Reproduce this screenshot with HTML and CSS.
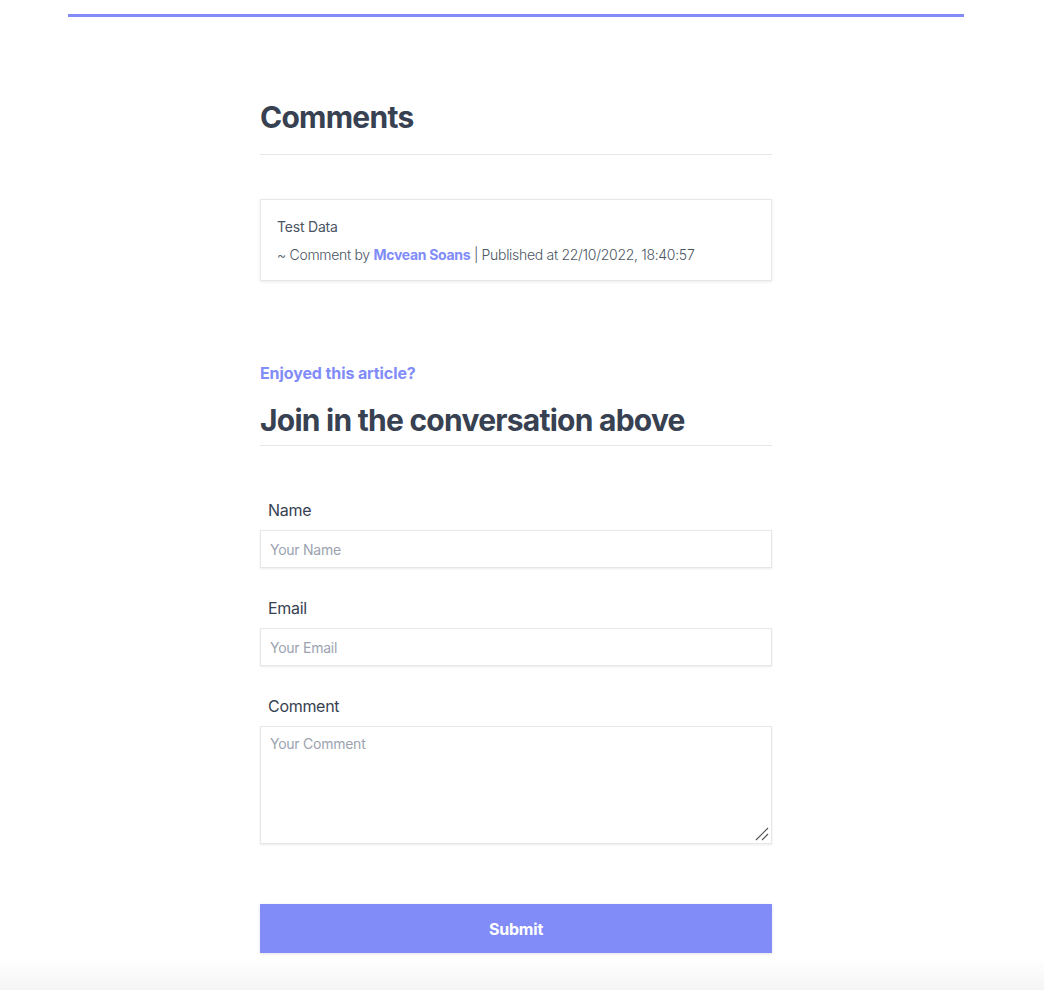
FILE: index.html
```html
<!DOCTYPE html>
<html lang="en">
<head>
<meta charset="utf-8">
<title>Comments</title>
<link rel="stylesheet" href="styles.css">
</head>
<body>
<div class="page">
  <div class="topbar"></div>
  <main class="main">
    <h2 class="title">Comments</h2>
    <hr class="rule">
    <div class="card">
      <p class="card-text">Test Data</p>
      <p class="card-meta">~ Comment by <span class="author">Mcvean Soans</span> <span class="sep">|</span> Published at 22/10/2022, 18:40:57</p>
    </div>
    <p class="eyebrow">Enjoyed this article?</p>
    <h2 class="title title-join">Join in the conversation above</h2>
    <hr class="rule rule-join">
    <form class="form">
      <label class="field">
        <span class="label">Name</span>
        <input class="input" type="text" placeholder="Your Name">
      </label>
      <label class="field">
        <span class="label">Email</span>
        <input class="input" type="email" placeholder="Your Email">
      </label>
      <label class="field">
        <span class="label">Comment</span>
        <span class="textarea-wrap">
          <textarea class="input textarea" placeholder="Your Comment"></textarea>
          <svg class="grip" width="14" height="14" viewBox="0 0 14 14" aria-hidden="true">
            <path d="M1 13 L13 1 M7 13 L13 7" stroke="#555" stroke-width="1.2" fill="none"/>
          </svg>
        </span>
      </label>
      <button class="submit" type="button">Submit</button>
    </form>
  </main>
</div>
</body>
</html>
```

FILE: styles.css
```css
html {
  background: linear-gradient(to bottom, #ffffff 0, #ffffff 957px, #f5f5f5 990px);
  min-height: 100%;
}
body {
  margin: 0;
  font-family: Inter, "Noto Sans", sans-serif;
  color: #374151;
}
.page {
  width: 1032px;
  height: 990px;
  overflow: hidden;
}
.topbar {
  margin: 14px 68px 0;
  height: 3px;
  background: #818cf8;
}
.main {
  width: 512px;
  margin: 0 auto;
}
.title {
  margin: 82px 0 0;
  font-size: 30px;
  line-height: 36px;
  font-weight: 700;
  letter-spacing: -0.75px;
  color: #374151;
}
.rule {
  margin: 19px 0 0;
  border: 0;
  border-top: 1px solid #e5e7eb;
}
.card {
  margin-top: 44px;
  border: 1px solid #e5e7eb;
  box-shadow: 0 1px 3px rgba(0, 0, 0, 0.08);
  padding: 17px 16px 15px;
}
.card-text {
  margin: 0 0 8px;
  font-size: 14px;
  line-height: 20px;
  letter-spacing: -0.2px;
  color: #4b5563;
}
.card-meta {
  margin: 0;
  font-size: 14px;
  line-height: 20px;
  font-weight: 300;
  letter-spacing: -0.3px;
  color: #4b5563;
}
.sep {
  color: #4b5563;
}
.author {
  font-weight: 700;
  color: #818cf8;
}
.eyebrow {
  margin: 80px 0 0;
  font-size: 16px;
  line-height: 24px;
  font-weight: 700;
  letter-spacing: -0.1px;
  color: #818cf8;
}
.title-join {
  margin-top: 17px;
}
.rule-join {
  margin-top: 7px;
}
.form {
  margin-top: 52px;
  display: flex;
  flex-direction: column;
}
.field {
  display: flex;
  flex-direction: column;
  margin-bottom: 28px;
}
.label {
  padding-left: 8px;
  font-size: 16px;
  line-height: 24px;
  letter-spacing: -0.3px;
  color: #374151;
  margin-bottom: 8px;
}
.input {
  box-sizing: border-box;
  width: 512px;
  height: 38px;
  margin: 0;
  padding: 8px 9px;
  border: 1px solid #e5e7eb;
  box-shadow: 0 1px 2px rgba(0, 0, 0, 0.08);
  font-family: Inter, "Noto Sans", sans-serif;
  font-size: 14px;
  letter-spacing: -0.25px;
  color: #374151;
  background: #fff;
  outline: none;
  border-radius: 0;
}
.input::placeholder {
  color: #9ca3af;
}
.textarea-wrap {
  position: relative;
  display: block;
}
.textarea {
  height: 118px;
  resize: none;
  display: block;
}
.grip {
  position: absolute;
  right: 3px;
  bottom: 3px;
}
.submit {
  margin-top: 32px;
  height: 49px;
  width: 512px;
  border: 0;
  background: #818cf8;
  color: #ffffff;
  font-family: Inter, "Noto Sans", sans-serif;
  font-size: 16px;
  font-weight: 700;
  letter-spacing: -0.2px;
  box-shadow: 0 1px 3px rgba(0, 0, 0, 0.12);
  cursor: pointer;
}
```
